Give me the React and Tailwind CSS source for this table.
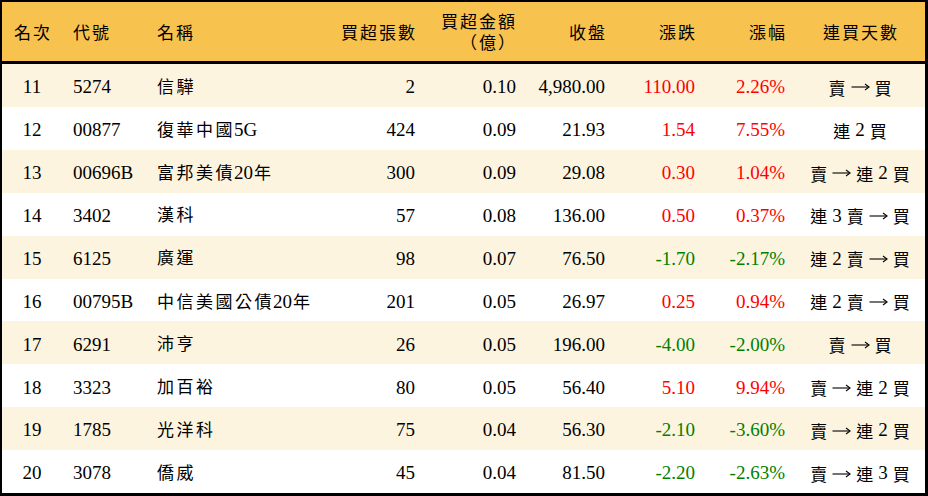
import React from "react";

const rows = [
  ["11", "5274", "信驊", "2", "0.10", "4,980.00", "110.00", "2.26%", "賣 → 買", "up"],
  ["12", "00877", "復華中國5G", "424", "0.09", "21.93", "1.54", "7.55%", "連 2 買", "up"],
  ["13", "00696B", "富邦美債20年", "300", "0.09", "29.08", "0.30", "1.04%", "賣 → 連 2 買", "up"],
  ["14", "3402", "漢科", "57", "0.08", "136.00", "0.50", "0.37%", "連 3 賣 → 買", "up"],
  ["15", "6125", "廣運", "98", "0.07", "76.50", "-1.70", "-2.17%", "連 2 賣 → 買", "down"],
  ["16", "00795B", "中信美國公債20年", "201", "0.05", "26.97", "0.25", "0.94%", "連 2 賣 → 買", "up"],
  ["17", "6291", "沛亨", "26", "0.05", "196.00", "-4.00", "-2.00%", "賣 → 買", "down"],
  ["18", "3323", "加百裕", "80", "0.05", "56.40", "5.10", "9.94%", "賣 → 連 2 買", "up"],
  ["19", "1785", "光洋科", "75", "0.04", "56.30", "-2.10", "-3.60%", "賣 → 連 2 買", "down"],
  ["20", "3078", "僑威", "45", "0.04", "81.50", "-2.20", "-2.63%", "賣 → 連 3 買", "down"],
];

const cjk = "font-['Liberation_Serif','Noto_Sans_CJK_TC',serif] text-[17px] tracking-[2px]";
const num = "font-['Liberation_Serif','Noto_Sans_CJK_TC',serif] text-[19px]";

function Arrow() {
  return (
    <svg width="19" height="10" viewBox="0 0 19 10" className="block">
      <path d="M0.5 5 H17.5" stroke="#000" strokeWidth="1.1" fill="none" />
      <path d="M14 2 L18.2 5 L14 8" stroke="#000" strokeWidth="1.1" fill="none" />
    </svg>
  );
}

function Name({ text }) {
  const parts = text.match(/[A-Za-z0-9]+|[^A-Za-z0-9]+/g) || [];
  return (
    <>
      {parts.map((p, i) =>
        /[A-Za-z0-9]/.test(p) ? (
          <span key={i} className="text-[19px] tracking-normal -ml-[1px] mr-[1px]">
            {p}
          </span>
        ) : (
          <span key={i} className="tracking-[2.5px]">{p}</span>
        )
      )}
    </>
  );
}

function Days({ text }) {
  const parts = text.split(" ");
  return (
    <div className="inline-flex items-center gap-[5px]">
      {parts.map((p, i) => {
        if (p === "→") return <Arrow key={i} />;
        if (/\d/.test(p))
          return (
            <span key={i} className="font-['Liberation_Serif',serif] text-[19px]">
              {p}
            </span>
          );
        return (
          <span key={i} className="font-['Noto_Sans_CJK_TC',sans-serif] text-[17px]">
            {p}
          </span>
        );
      })}
    </div>
  );
}

export default function App() {
  return (
    <div className="w-[928px] h-[496px] bg-white border-t-2 border-l-2 border-r-[3px] border-b-[3px] border-black flex flex-col text-black">
      <div className={`h-[62px] shrink-0 bg-[#F8C24F] border-b-[3px] border-black flex items-center pt-[4px] ${cjk}`}>
        <div className="w-[60px] text-center pl-[2px]">名次</div>
        <div className="w-[84px] pl-[11px]">代號</div>
        <div className="w-[184px] pl-[11px]">名稱</div>
        <div className="w-[95px] text-right pr-[8px]">買超張數</div>
        <div className="w-[101px] text-right pr-[9px] leading-[21px] -mt-[2px]">
          <div>買超金額</div>
          <div>（億）</div>
        </div>
        <div className="w-[89px] text-right pr-[8px]">收盤</div>
        <div className="w-[90px] text-right pr-[8px]">漲跌</div>
        <div className="w-[90px] text-right pr-[8px]">漲幅</div>
        <div className="w-[130px] text-center pl-[2px]">連買天數</div>
      </div>
      {rows.map((r, i) => {
        const color = r[9] === "up" ? "text-[#FF0000]" : "text-[#008000]";
        return (
          <div
            key={r[0]}
            className={`flex-1 flex items-center pt-[4px] ${i % 2 === 0 ? "bg-[#FDF4E0]" : "bg-white"}`}
          >
            <div className={`w-[60px] text-center ${num}`}>{r[0]}</div>
            <div className={`w-[84px] pl-[11px] ${num}`}>{r[1]}</div>
            <div className={`w-[184px] pl-[11px] whitespace-nowrap ${cjk}`}>
              <Name text={r[2]} />
            </div>
            <div className={`w-[95px] text-right pr-[10px] ${num}`}>{r[3]}</div>
            <div className={`w-[101px] text-right pr-[10px] ${num}`}>{r[4]}</div>
            <div className={`w-[89px] text-right pr-[10px] ${num}`}>{r[5]}</div>
            <div className={`w-[90px] text-right pr-[10px] ${num} ${color}`}>{r[6]}</div>
            <div className={`w-[90px] text-right pr-[10px] ${num} ${color}`}>{r[7]}</div>
            <div className="w-[130px] flex justify-center whitespace-nowrap">
              <Days text={r[8]} />
            </div>
          </div>
        );
      })}
    </div>
  );
}
